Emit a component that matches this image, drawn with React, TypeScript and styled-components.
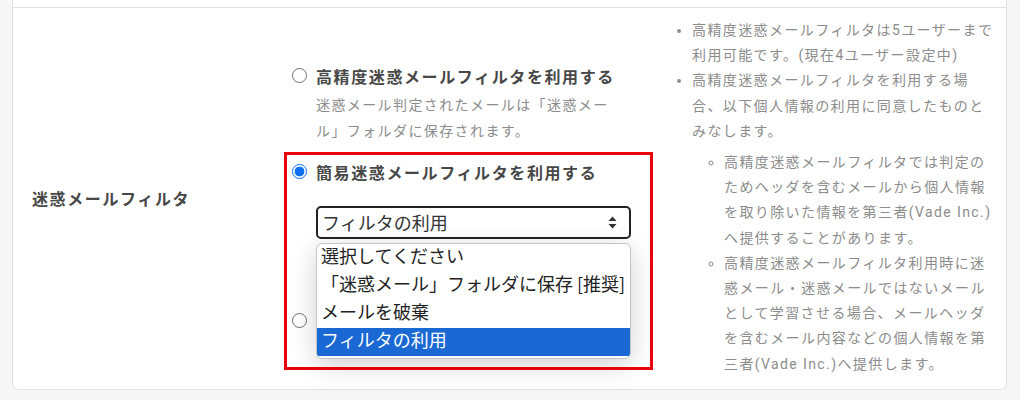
import React from "react";
import styled, { createGlobalStyle } from "styled-components";

const GlobalStyle = createGlobalStyle`
	html, body {
		margin: 0;
		padding: 0;
		background: #f6f6f6;
		font-family: Roboto, "Noto Sans CJK JP", sans-serif;
	}
`;

const Page = styled.div`
	padding: 0 13px 0 12px;
	height: 400px;
	overflow: hidden;
`;

const Card = styled.div`
	background: #fff;
	border: 1px solid #e2e2e2;
	border-top: none;
	border-radius: 0 0 6px 6px;
`;

const PrevRow = styled.div`
	height: 7px;
`;

const Row = styled.div`
	display: grid;
	grid-template-columns: 272px 375px 1fr;
	border-top: 1px solid #e2e2e2;
`;

const LabelCell = styled.div`
	display: flex;
	align-items: center;
	padding-left: 19px;
	font-size: 16px;
	font-weight: 700;
	letter-spacing: 0.1em;
	color: #474747;
`;

const OptionsCell = styled.div`
	display: flex;
	flex-direction: column;
	justify-content: center;
	padding-left: 7px;
`;

const OptionLabel = styled.label<{ $gap?: number }>`
	display: flex;
	align-items: center;
	gap: 9px;
	height: 26px;
	margin-top: ${(p) => p.$gap ?? 0}px;
	font-size: 16px;
	font-weight: 700;
	letter-spacing: 0.1em;
	color: #474747;
	white-space: nowrap;
`;

const Radio = styled.span<{ $checked?: boolean }>`
	box-sizing: border-box;
	flex: none;
	width: 15px;
	height: 15px;
	border-radius: 50%;
	border: 1px solid ${(p) => (p.$checked ? "#0b6ff0" : "#6d6d6d")};
	background: ${(p) =>
		p.$checked
			? "radial-gradient(circle, #0b6ff0 0 4.6px, #fff 5.2px)"
			: "#fff"};
`;

const Description = styled.p`
	margin: 3px 0 0 24px;
	width: 300px;
	font-size: 14px;
	line-height: 26px;
	letter-spacing: 0.1em;
	color: #8c8c8c;
`;

const Highlighted = styled.div`
	position: relative;
	margin-top: 15px;

	&::after {
		content: "";
		position: absolute;
		top: -7px;
		left: -8px;
		width: 369px;
		height: 218px;
		box-sizing: border-box;
		border: 3px solid #e8000b;
		pointer-events: none;
		z-index: 3;
	}
`;

const SelectBox = styled.div`
	position: relative;
	box-sizing: border-box;
	display: flex;
	align-items: center;
	justify-content: space-between;
	width: 315px;
	height: 33px;
	margin: 21px 0 0 24px;
	padding: 0 12px 0 4px;
	border: 2px solid #222;
	border-radius: 5px;
	font-family: "Noto Sans CJK JP", sans-serif;
	font-size: 18px;
	color: #333;
`;

const Listbox = styled.ul`
	position: absolute;
	top: 35px;
	left: -2px;
	z-index: 2;
	box-sizing: border-box;
	width: 315px;
	margin: 0;
	padding: 0 0 2px;
	list-style: none;
	background: #fff;
	border: 1px solid #c4c4c4;
	border-radius: 6px;
	overflow: hidden;
	box-shadow: 0 6px 26px rgba(0, 0, 0, 0.18);
`;

const ListItem = styled.li<{ $active?: boolean }>`
	height: 28px;
	padding-left: 4px;
	font-family: "Noto Sans CJK JP", sans-serif;
	font-size: 18px;
	line-height: 23px;
	white-space: nowrap;
	color: ${(p) => (p.$active ? "#fff" : "#222")};
	background: ${(p) => (p.$active ? "#1a68d3" : "transparent")};
`;

const NotesCell = styled.div`
	padding: 10px 10px 12px 16px;
	font-size: 14px;
	line-height: 25.2px;
	letter-spacing: 0.1em;
	color: #8c8c8c;
`;

const Notes = styled.ul<{ $nested?: boolean }>`
	margin: ${(p) => (p.$nested ? "6px 0 0" : "0")};
	padding-left: ${(p) => (p.$nested ? "32px" : "16px")};
	list-style: ${(p) => (p.$nested ? "circle" : "disc")};
`;

const options = [
	"選択してください",
	"「迷惑メール」フォルダに保存 [推奨]",
	"メールを破棄",
	"フィルタの利用",
];

const Arrows = () => (
	<svg width="9" height="13" viewBox="0 0 9 13">
		<path d="M4.5 0.5L8.5 5H0.5Z M4.5 12.5L0.5 8H8.5Z" fill="#333" />
	</svg>
);

const App: React.FC = () => {
	const selected = 3;

	return (
		<React.Fragment>
			<GlobalStyle />
			<Page>
				<Card>
					<PrevRow />
					<Row>
						<LabelCell>迷惑メールフィルタ</LabelCell>
						<OptionsCell>
							<OptionLabel>
								<Radio />
								高精度迷惑メールフィルタを利用する
							</OptionLabel>
							<Description>
								迷惑メール判定されたメールは「迷惑メール」フォルダに保存されます。
							</Description>
							<Highlighted>
								<OptionLabel>
									<Radio $checked />
									簡易迷惑メールフィルタを利用する
								</OptionLabel>
								<SelectBox>
									{options[selected]}
									<Arrows />
									<Listbox>
										{options.map((o, i) => (
											<ListItem key={o} $active={i === selected}>
												{o}
											</ListItem>
										))}
									</Listbox>
								</SelectBox>
							</Highlighted>
							<OptionLabel $gap={69}>
								<Radio />
								迷惑メールフィルタを利用しない
							</OptionLabel>
						</OptionsCell>
						<NotesCell>
							<Notes>
								<li>高精度迷惑メールフィルタは5ユーザーまで利用可能です。(現在4ユーザー設定中)</li>
								<li>
									高精度迷惑メールフィルタを利用する場合、以下個人情報の利用に同意したものとみなします。
									<Notes $nested>
										<li>
											高精度迷惑メールフィルタでは判定のためヘッダを含むメールから個人情報を取り除いた情報を第三者(Vade Inc.)へ提供することがあります。
										</li>
										<li>
											高精度迷惑メールフィルタ利用時に迷惑メール・迷惑メールではないメールとして学習させる場合、メールヘッダを含むメール内容などの個人情報を第三者(Vade Inc.)へ提供します。
										</li>
									</Notes>
								</li>
							</Notes>
						</NotesCell>
					</Row>
				</Card>
			</Page>
		</React.Fragment>
	);
};

export default App;
